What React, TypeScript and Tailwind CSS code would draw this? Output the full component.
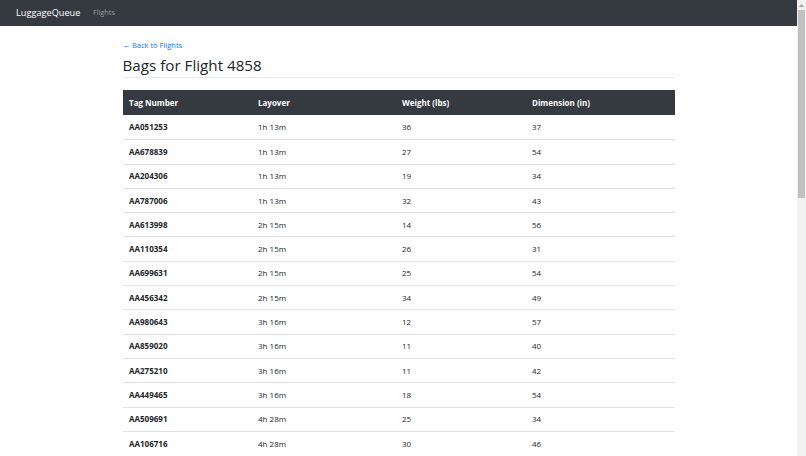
import React from "react";

const rows: [string, string, string, string][] = [
  ["AA051253", "1h 13m", "36", "37"],
  ["AA678839", "1h 13m", "27", "54"],
  ["AA204306", "1h 13m", "19", "34"],
  ["AA787006", "1h 13m", "32", "43"],
  ["AA613998", "2h 15m", "14", "56"],
  ["AA110354", "2h 15m", "26", "31"],
  ["AA699631", "2h 15m", "25", "54"],
  ["AA456342", "2h 15m", "34", "49"],
  ["AA980643", "3h 16m", "12", "57"],
  ["AA859020", "3h 16m", "11", "40"],
  ["AA275210", "3h 16m", "11", "42"],
  ["AA449465", "3h 16m", "18", "54"],
  ["AA509691", "4h 28m", "25", "34"],
  ["AA106716", "4h 28m", "30", "46"],
];

export default function App() {
  return (
    <div
      className="flex h-[456px] w-full overflow-hidden bg-white text-[#212529]"
      style={{ fontFamily: '"Open Sans", "Noto Sans", sans-serif' }}
    >
      <div className="flex min-w-0 flex-1 flex-col">
        <nav className="flex h-[26px] shrink-0 items-center bg-[#343a40] px-[16px]">
          <span className="text-[9.2px] leading-none text-white">LuggageQueue</span>
          <span className="ml-[12.5px] text-[7.3px] leading-none text-[#9a9da1]">Flights</span>
        </nav>
        <main className="mx-auto w-[552px] pt-[13px]">
          <a className="block text-[7.5px] leading-[12px] text-[#007bff]">← Back to Flights</a>
          <h2 className="mt-[5px] border-b border-[#e9ecef] pb-[3px] text-[15.2px] leading-[18px] font-normal">
            Bags for Flight 4858
          </h2>
          <div className="mt-[12px] text-[8px]">
            <div className="grid h-[25px] grid-cols-[129px_144px_130px_1fr] items-center bg-[#343a40] font-bold text-white">
              <div className="pl-[6.5px]">Tag Number</div>
              <div className="pl-[6.5px]">Layover</div>
              <div className="pl-[6.5px]">Weight (lbs)</div>
              <div className="pl-[6.5px]">Dimension (in)</div>
            </div>
            {rows.map((r, i) => (
              <div
                key={r[0]}
                className={
                  "grid h-[24.3px] grid-cols-[129px_144px_130px_1fr] items-center " +
                  (i === 0 ? "" : "border-t border-[#dee2e6]")
                }
              >
                <div className="pl-[6.5px] font-bold">{r[0]}</div>
                <div className="pl-[6.5px]">{r[1]}</div>
                <div className="pl-[6.5px]">{r[2]}</div>
                <div className="pl-[6.5px]">{r[3]}</div>
              </div>
            ))}
          </div>
        </main>
      </div>
      <div className="flex w-[9px] shrink-0 flex-col bg-[#f1f1f1]">
        <div className="flex h-[10px] items-center justify-center">
          <svg width="5" height="3" viewBox="0 0 5 3">
            <path d="M2.5 0 L5 3 L0 3 Z" fill="#a3a3a3" />
          </svg>
        </div>
        <div className="mx-[1px] h-[188px] bg-[#c1c1c1]" />
      </div>
    </div>
  );
}
